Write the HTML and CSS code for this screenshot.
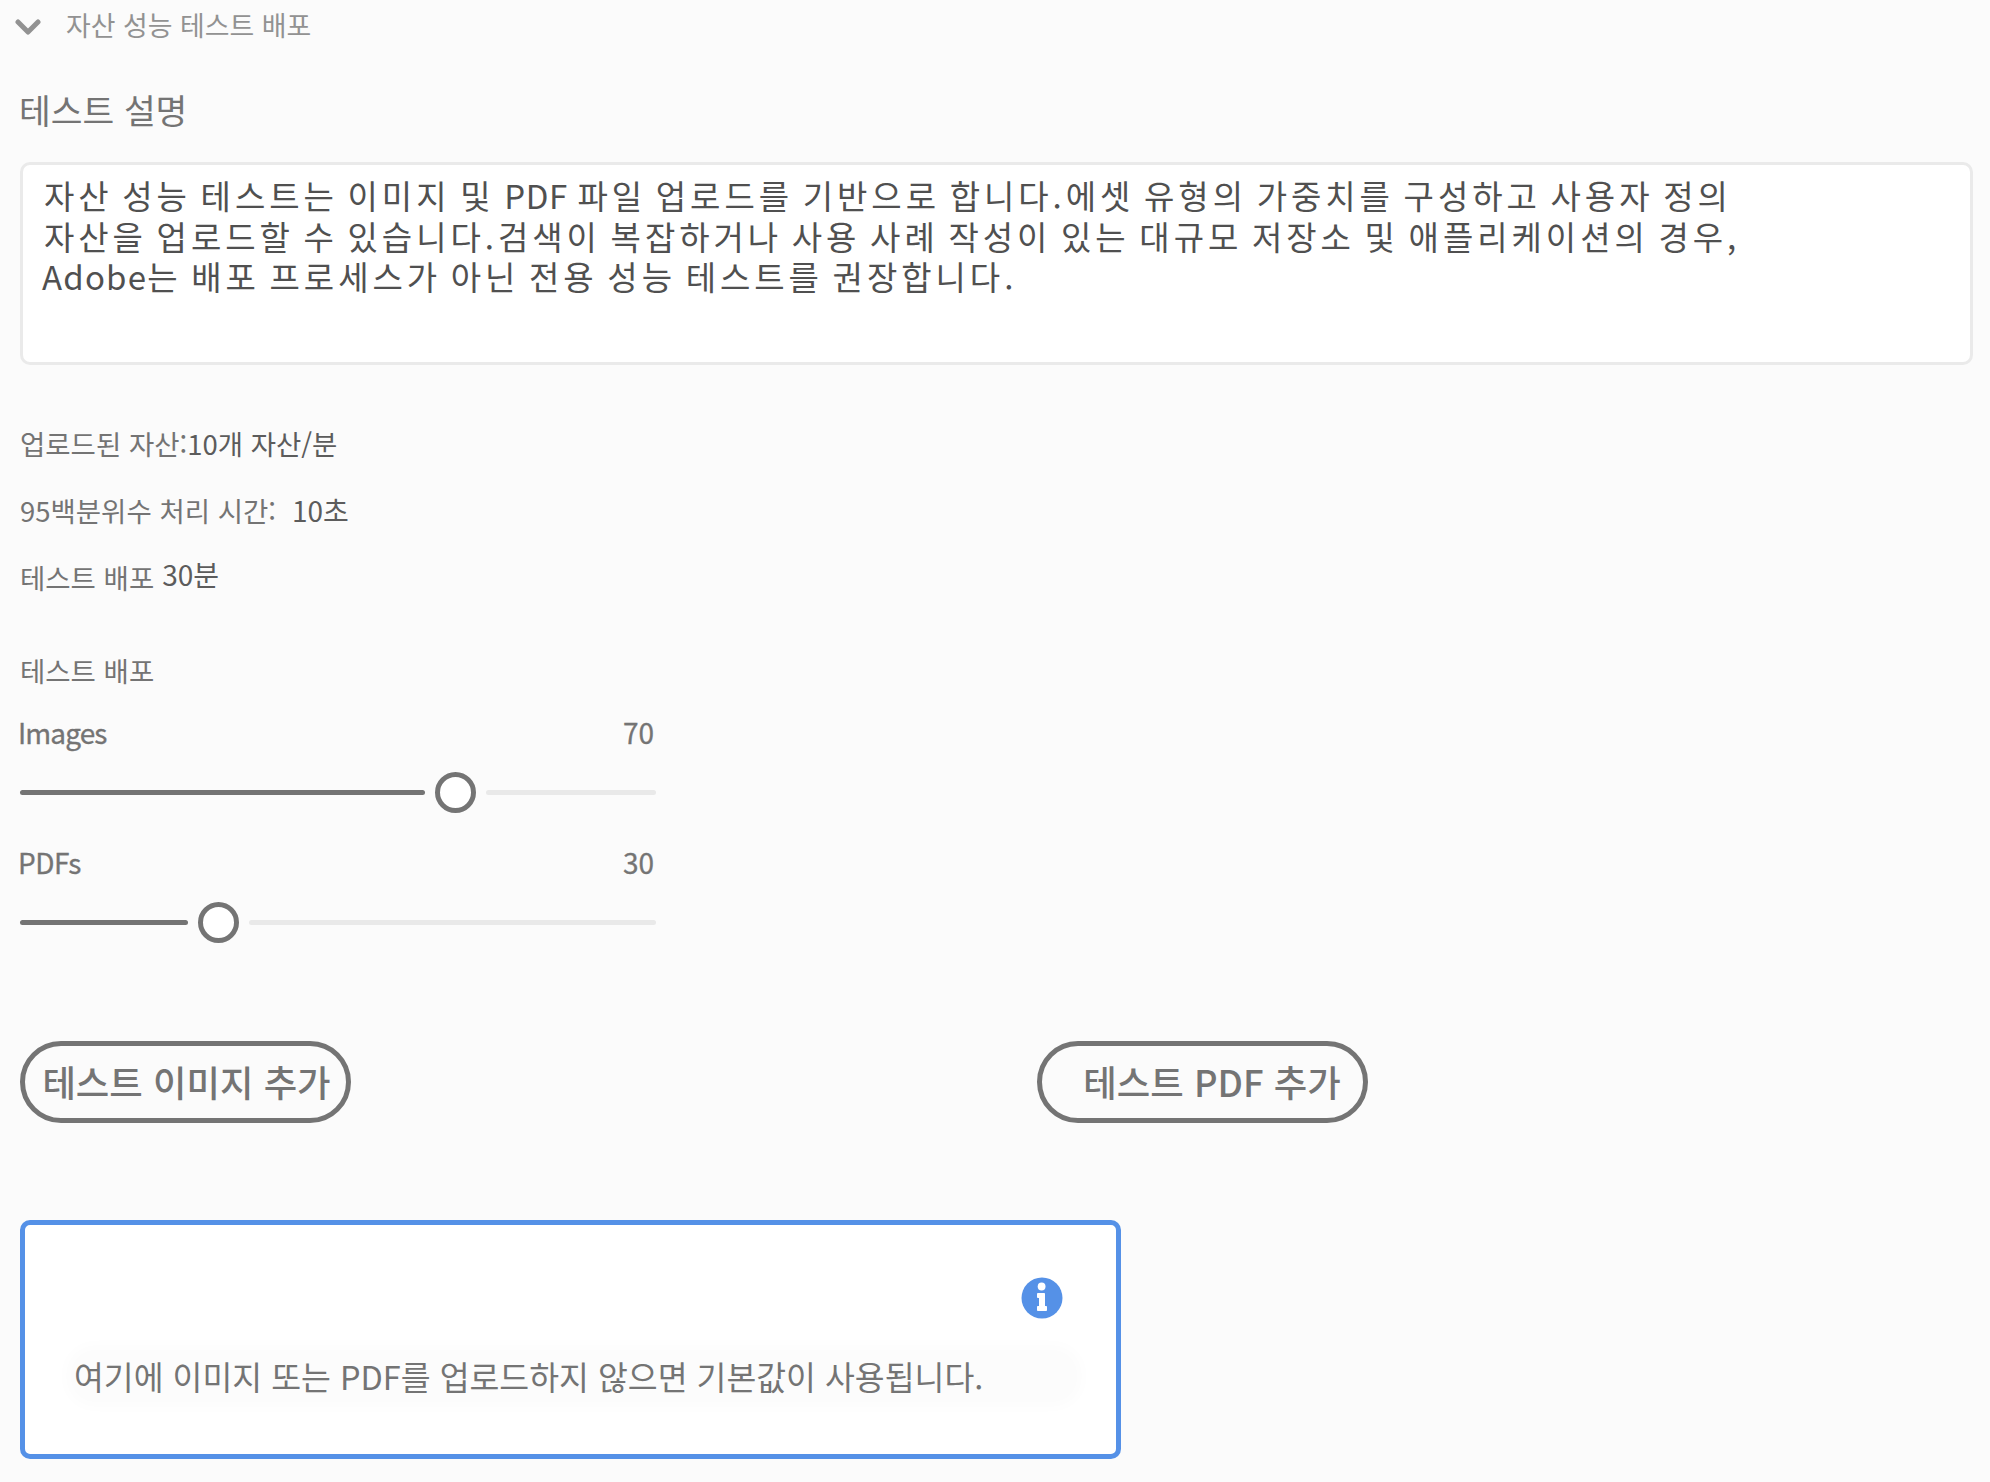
FILE: index.html
```html
<!DOCTYPE html>
<html lang="ko">
<head>
<meta charset="utf-8">
<title>자산 성능 테스트 배포</title>
<link rel="stylesheet" href="styles.css">
</head>
<body>
<main class="page">
  <header class="section-toggle">
    <svg class="chevron" width="26" height="17" viewBox="0 0 26 17"><path d="M3 3 L13 13 L23 3" fill="none" stroke="#929292" stroke-width="5" stroke-linecap="round" stroke-linejoin="round"/></svg>
    <span>자산 성능 테스트 배포</span>
  </header>
  <h1 class="title">테스트 설명</h1>
  <p class="description">자산 성능 테스트는 이미지 및 <span class="latin">PDF</span> 파일 업로드를 기반으로 합니다.에셋 유형의 가중치를 구성하고 사용자 정의<br>자산을 업로드할 수 있습니다.검색이 복잡하거나 사용 사례 작성이 있는 대규모 저장소 및 애플리케이션의 경우,<br><span class="latin brand">Adobe</span>는 배포 프로세스가 아닌 전용 성능 테스트를 권장합니다.</p>
  <dl class="facts">
    <div class="fact"><dt>업로드된 자산:</dt><dd>10개 자산/분</dd></div>
    <div class="fact fact-time"><dt>95백분위수 처리 시간:</dt><dd>10초</dd></div>
    <div class="fact fact-run"><dt>테스트 배포</dt><dd>30분</dd></div>
  </dl>
  <h2 class="subtitle">테스트 배포</h2>
  <div class="slider">
    <div class="slider-head"><span class="slider-name">Images</span><span>70</span></div>
    <div class="slider-row"><span class="fill" style="width:404.500px"></span><span class="handle"></span><span class="rest"></span></div>
  </div>
  <div class="slider">
    <div class="slider-head"><span class="slider-name pdfs">PDFs</span><span>30</span></div>
    <div class="slider-row"><span class="fill" style="width:168px"></span><span class="handle"></span><span class="rest"></span></div>
  </div>
  <div class="actions">
    <button class="pill">테스트 이미지 추가</button>
    <button class="pill pill-pdf">테스트 PDF 추가</button>
  </div>
  <section class="notice">
    <svg class="info" width="42" height="42" viewBox="0 0 42 42"><circle cx="21" cy="21" r="20.5" fill="#5591e7"/><circle cx="20.6" cy="9.5" r="3.9" fill="#fff"/><path d="M17 16h6.200q.8 0 .8.800V29h1.200q.8 0 .8.800V33q0 1-.8 1h-8.400q-.8 0-.8-1v-3.200q0-.8.8-.8H18v-8h-1q-1 0-1-.8v-3.400q0-.8 1-.8z" fill="#fff"/></svg>
    <p>여기에 이미지 또는 PDF를 업로드하지 않으면 기본값이 사용됩니다.</p>
  </section>
</main>
</body>
</html>
```
FILE: styles.css
```css
* { box-sizing: border-box; }
body {
  margin: 0;
  background: #fbfbfb;
  color: #747474;
  font-family: "Noto Sans CJK KR", sans-serif;
}
p, h1, h2, dl, dd { margin: 0; font-weight: 400; }
.page { height: 1482px; padding: 0 17px 0 20px; overflow: hidden; }
.section-toggle {
  display: flex;
  align-items: center;
  height: 49px;
  margin-left: -5px;
  gap: 25px;
  color: #929292;
  font-size: 26.9px;
  line-height: 50px;
}
.chevron { margin-top: 5px; }
.title { margin-top: 35px; margin-left: -1px; font-size: 34.5px; line-height: 50px; }
.description {
  height: 203px;
  margin-top: 28px;
  padding: 10px 21px;
  border: 3px solid #eaeaea;
  border-radius: 10px;
  background: #fff;
  color: #505050;
  font-size: 33px;
  letter-spacing: 3.95px;
  word-spacing: -3.500px;
  line-height: 40.500px;
  white-space: nowrap;
}
.latin { letter-spacing: .6px; }
.brand { margin-left: -2px; letter-spacing: 1.200px; }
.facts { margin-top: 58px; }
.fact { display: flex; height: 67px; line-height: 40px; font-size: 27.5px; }
.fact dd { color: #5c5c5c; }
.fact-time dd { margin-left: 16px; font-size: 28px; }
.fact-run dd { margin-left: 8px; margin-top: -3px; font-size: 28px; }
.subtitle { margin-top: 26px; font-size: 27.5px; line-height: 40px; }
.slider { width: 636px; height: 130px; }
.slider-head {
  display: flex;
  justify-content: space-between;
  padding: 22px 2px 0 0;
  font-size: 28px;
  line-height: 40px;
  -webkit-text-stroke: .3px #747474;
}
.slider-name { margin-left: -2px; letter-spacing: -.9px; }
.pdfs { letter-spacing: -.5px; }
.slider-row { display: flex; align-items: center; gap: 10px; height: 42px; margin-top: 19px; }
.fill { height: 5px; border-radius: 3px; background: #747474; }
.handle { width: 41px; height: 41px; border: 5px solid #747474; border-radius: 50%; background: #fff; }
.rest { flex: 1; height: 5px; border-radius: 3px; background: #e9e9e9; }
.actions { display: flex; gap: 686px; margin-top: 91px; }
.pill {
  width: 331px;
  height: 82px;
  padding: 0 0 2px 2px;
  border: 5px solid #747474;
  border-radius: 41px;
  background: transparent;
  color: #747474;
  font: 500 36.4px/68px "Noto Sans CJK KR", sans-serif;
  white-space: nowrap;
}
.pill-pdf { padding-left: 19px; }
.notice {
  display: flex;
  flex-direction: column;
  width: 1101px;
  height: 239px;
  margin-top: 97px;
  padding: 52px 53px 0 49px;
  border: 5px solid #5591e7;
  border-radius: 10px;
  background: #fff;
  font-size: 32.45px;
  line-height: 46px;
}
.info { align-self: flex-end; }
.notice p {
  width: 1000px;
  margin-top: 34px;
  border-radius: 20px;
  background: #fcfcfc;
  box-shadow: 0 0 14px 8px #fcfcfc;
  white-space: nowrap;
}
```
